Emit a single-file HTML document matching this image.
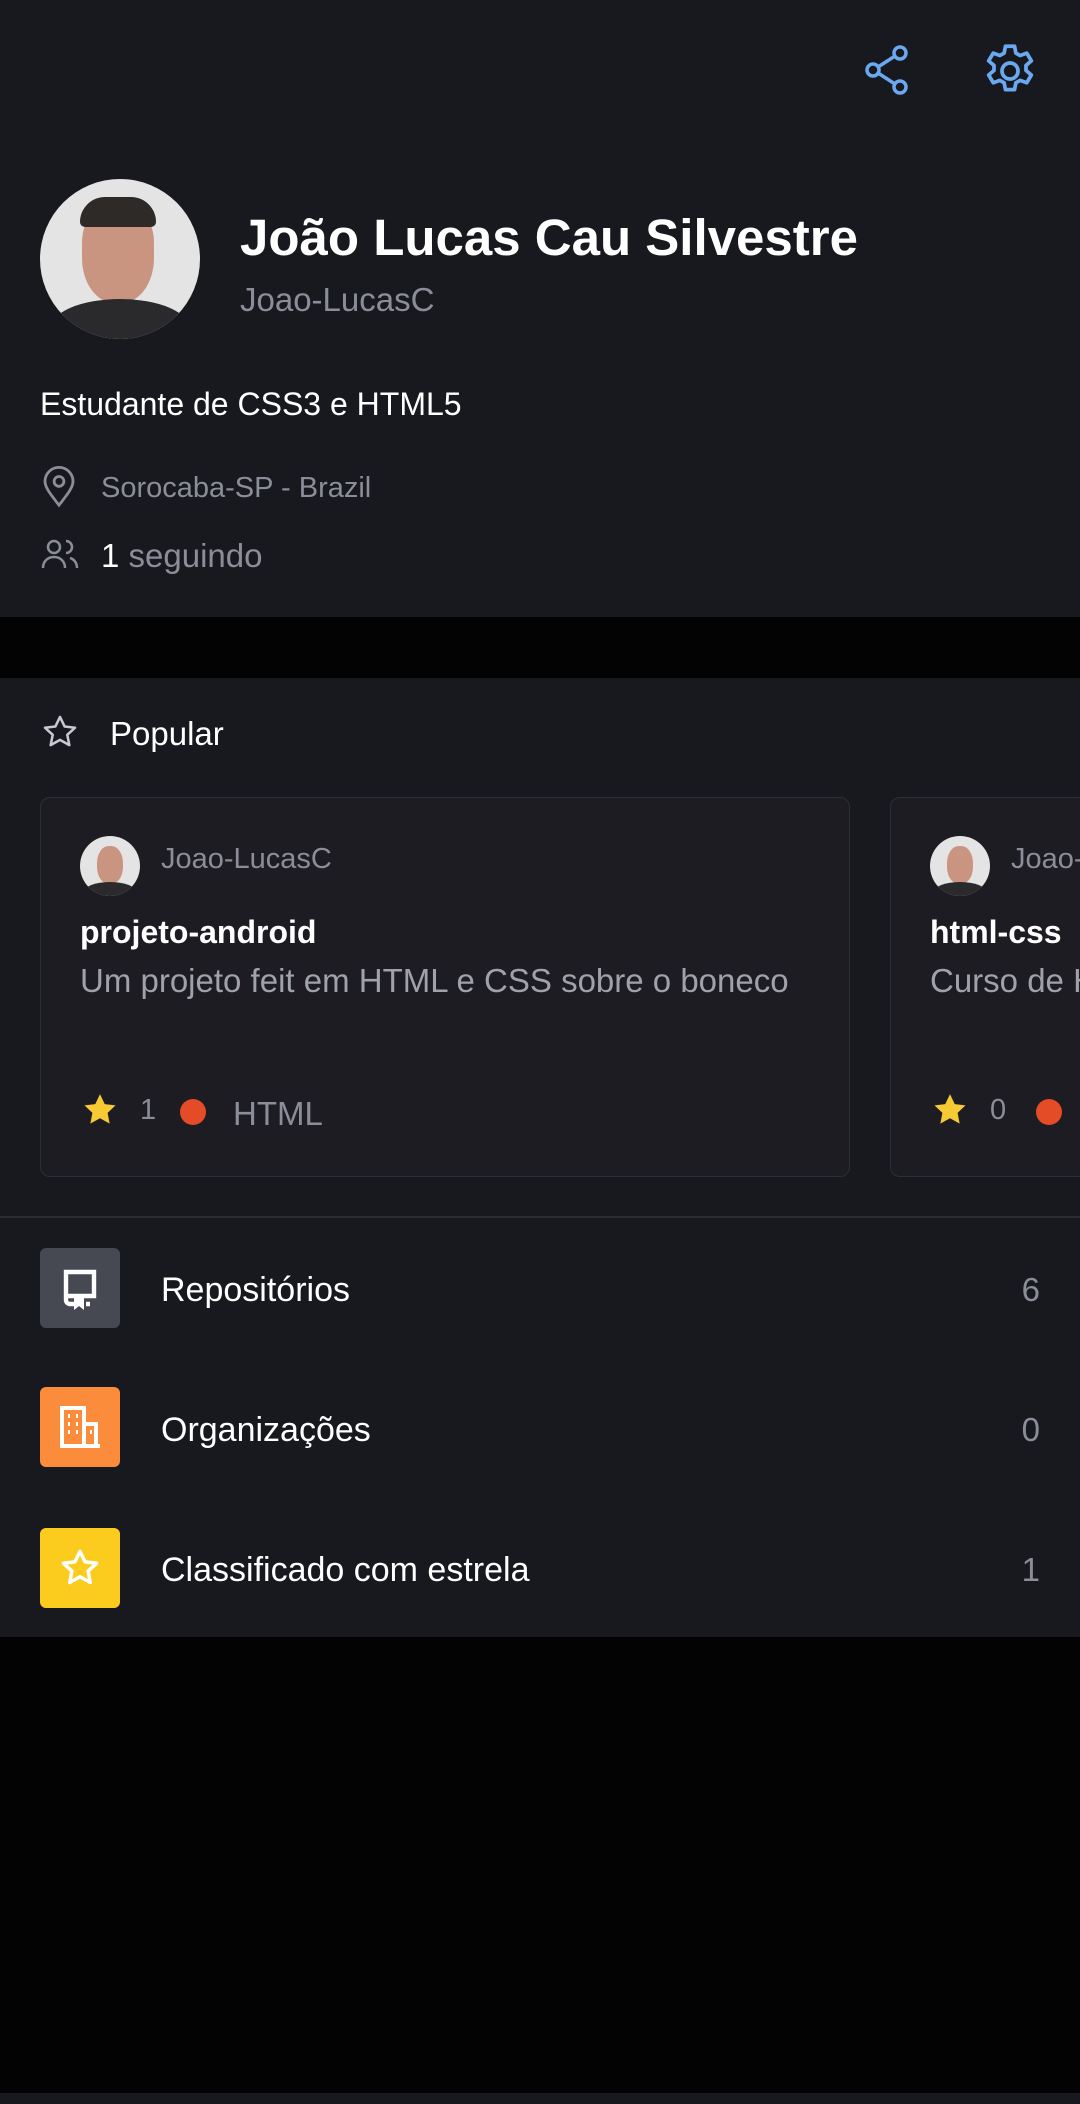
<!DOCTYPE html>
<html><head><meta charset="utf-8"><style>
*{margin:0;padding:0;box-sizing:border-box}
html,body{width:1080px;height:2104px;overflow:hidden}
body{background:#030303;font-family:"Liberation Sans",sans-serif;position:relative;color:#fff}
.a{position:absolute;white-space:nowrap}
.sec{background:#18191f;left:0;width:1080px}
.g{color:#8b8d98}
</style></head><body>
<div class="a sec" style="top:0;height:617px"></div>
<svg class="a" style="left:862px;top:44px" width="50" height="52" viewBox="0 0 50 52" fill="none" stroke="#6aa8f0" stroke-width="3.5"><circle cx="38" cy="9" r="6"/><circle cx="11" cy="26" r="6"/><circle cx="38" cy="43" r="6"/><path d="M16 23 33 12M16 29 33 40"/></svg>
<svg class="a" style="left:978px;top:39px" width="64" height="64" viewBox="0 0 24 24" fill="none" stroke="#6aa8f0" stroke-width="1.4" stroke-linejoin="round"><path d="M10.3 2.7h3.4l.5 2.6 1.6.9 2.5-.9 1.7 2.9-2 1.7v1.9l2 1.7-1.7 2.9-2.5-.9-1.6.9-.5 2.6h-3.4l-.5-2.6-1.6-.9-2.5.9-1.7-2.9 2-1.7v-1.9l-2-1.7 1.7-2.9 2.5.9 1.6-.9z"/><circle cx="12" cy="12" r="3"/></svg>
<div class="a" style="left:40px;top:179px;width:160px;height:160px;border-radius:50%;overflow:hidden;background:#e4e4e4">
<div class="a" style="left:42px;top:24px;width:72px;height:100px;border-radius:40% 40% 45% 45%;background:#c99580"></div>
<div class="a" style="left:40px;top:18px;width:76px;height:30px;border-radius:40px 40px 8px 8px;background:#2e2a28"></div>
<div class="a" style="left:10px;top:120px;width:140px;height:60px;border-radius:50% 50% 0 0;background:#2a2a2c"></div></div>
<div class="a" style="left:240px;top:208px;font-size:51px;font-weight:bold">João Lucas Cau Silvestre</div>
<div class="a g" style="left:240px;top:281px;font-size:33px">Joao-LucasC</div>
<div class="a" style="left:40px;top:386px;font-size:32px">Estudante de CSS3 e HTML5</div>
<svg class="a" style="left:42px;top:466px" width="34" height="42" viewBox="0 0 24 30" fill="none" stroke="#8b8d98" stroke-width="2"><path d="M12 28C5 19 2 15 2 11a10 10 0 0 1 20 0c0 4-3 8-10 17z"/><circle cx="12" cy="11" r="3.5"/></svg>
<div class="a g" style="left:101px;top:472px;font-size:29px">Sorocaba-SP - Brazil</div>
<svg class="a" style="left:41px;top:538px" width="40" height="32" viewBox="0 0 40 32" fill="none" stroke="#8b8d98" stroke-width="2.5"><circle cx="13" cy="9" r="6"/><path d="M2 30c0-7 5-11 11-11s11 4 11 11"/><path d="M25 3a6 6 0 0 1 0 12M29 20c4 1 7 5 7 10"/></svg>
<div class="a" style="left:101px;top:537px;font-size:33px"><span>1</span><span class="g"> seguindo</span></div>

<div class="a sec" style="top:678px;height:959px"></div>
<svg class="a" style="left:40px;top:713px" width="40" height="38" viewBox="0 0 24 24" fill="none" stroke="#c8c9d0" stroke-width="1.6" stroke-linejoin="round"><path d="M12 2.5l2.9 6 6.6.8-4.9 4.5 1.3 6.5L12 17l-5.9 3.3 1.3-6.5-4.9-4.5 6.6-.8z"/></svg>
<div class="a" style="left:110px;top:715px;font-size:33px">Popular</div>

<div class="a" style="left:40px;top:797px;width:810px;height:380px;border:1.5px solid #2e2f36;border-radius:10px;background:#1c1c22"></div>
<div class="a" style="left:80px;top:836px;width:60px;height:60px;border-radius:50%;background:#e4e4e4;overflow:hidden"><div class="a" style="left:17px;top:10px;width:26px;height:38px;border-radius:45%;background:#c99580"></div><div class="a" style="left:4px;top:46px;width:52px;height:20px;border-radius:50% 50% 0 0;background:#2a2a2c"></div></div>
<div class="a g" style="left:161px;top:843px;font-size:29px">Joao-LucasC</div>
<div class="a" style="left:80px;top:914px;font-size:32px;font-weight:bold">projeto-android</div>
<div class="a" style="left:80px;top:962px;font-size:33px;color:#a0a2aa">Um projeto feit em HTML e CSS sobre o boneco</div>
<svg class="a" style="left:80px;top:1091px" width="40" height="38" viewBox="0 0 24 24"><path fill="#f7c934" d="M12 2l3 6.3 6.8.8-5 4.7 1.3 6.8L12 17.2 5.9 20.6l1.3-6.8-5-4.7 6.8-.8z"/></svg>
<div class="a g" style="left:140px;top:1094px;font-size:29px">1</div>
<div class="a" style="left:180px;top:1099px;width:26px;height:26px;border-radius:50%;background:#e34c26"></div>
<div class="a g" style="left:233px;top:1095px;font-size:33px">HTML</div>

<div class="a" style="left:890px;top:797px;width:190px;height:380px;overflow:hidden">
<div class="a" style="left:0;top:0;width:300px;height:380px;border:1.5px solid #2e2f36;border-radius:10px;background:#1c1c22"></div>
<div class="a" style="left:40px;top:39px;width:60px;height:60px;border-radius:50%;background:#e4e4e4;overflow:hidden"><div class="a" style="left:17px;top:10px;width:26px;height:38px;border-radius:45%;background:#c99580"></div><div class="a" style="left:4px;top:46px;width:52px;height:20px;border-radius:50% 50% 0 0;background:#2a2a2c"></div></div>
<div class="a g" style="left:121px;top:46px;font-size:29px">Joao-LucasC</div>
<div class="a" style="left:40px;top:117px;font-size:32px;font-weight:bold">html-css</div>
<div class="a" style="left:40px;top:165px;font-size:33px;color:#a0a2aa">Curso de HTML</div>
<svg class="a" style="left:40px;top:294px" width="40" height="38" viewBox="0 0 24 24"><path fill="#f7c934" d="M12 2l3 6.3 6.8.8-5 4.7 1.3 6.8L12 17.2 5.9 20.6l1.3-6.8-5-4.7 6.8-.8z"/></svg>
<div class="a g" style="left:100px;top:297px;font-size:29px">0</div>
<div class="a" style="left:146px;top:302px;width:26px;height:26px;border-radius:50%;background:#e34c26"></div>
</div>

<div class="a" style="left:0;top:1216px;width:1080px;height:1.5px;background:#2c2d33"></div>

<div class="a" style="left:40px;top:1248px;width:80px;height:80px;border-radius:6px;background:#464852"></div>
<svg class="a" style="left:62px;top:1268px" width="36" height="42" viewBox="0 0 18 21" fill="none" stroke="#fff" stroke-width="2.2"><path d="M2 16V2h14v12H2M2 16a2 2 0 0 0 2 2h2M12 18h2"/><path fill="#fff" stroke="none" d="M6 15h5v6l-2.5-2-2.5 2z"/></svg>
<div class="a" style="left:161px;top:1271px;font-size:34px">Repositórios</div>
<div class="a g" style="left:1000px;top:1271px;font-size:33px;width:40px;text-align:right">6</div>

<div class="a" style="left:40px;top:1387px;width:80px;height:80px;border-radius:6px;background:#fb8c3c"></div>
<svg class="a" style="left:60px;top:1406px" width="40" height="42" viewBox="0 0 20 21" fill="none" stroke="#fff" stroke-width="2"><path d="M1 20V1h11v19M12 9h6v11M0 20h20"/><path d="M4 5h1M8 5h1M4 9h1M8 9h1M4 13h1M8 13h1M15 13h1"/></svg>
<div class="a" style="left:161px;top:1411px;font-size:34px">Organizações</div>
<div class="a g" style="left:1000px;top:1411px;font-size:33px;width:40px;text-align:right">0</div>

<div class="a" style="left:40px;top:1528px;width:80px;height:80px;border-radius:6px;background:#fbcb1d"></div>
<svg class="a" style="left:59px;top:1547px" width="42" height="42" viewBox="0 0 24 24" fill="none" stroke="#fff" stroke-width="2" stroke-linejoin="round"><path d="M12 2.5l2.9 6 6.6.8-4.9 4.5 1.3 6.5L12 17l-5.9 3.3 1.3-6.5-4.9-4.5 6.6-.8z"/></svg>
<div class="a" style="left:161px;top:1551px;font-size:34px">Classificado com estrela</div>
<div class="a g" style="left:1000px;top:1551px;font-size:33px;width:40px;text-align:right">1</div>

<div class="a" style="left:0;top:2093px;width:1080px;height:11px;background:#18191f"></div>
</body></html>
